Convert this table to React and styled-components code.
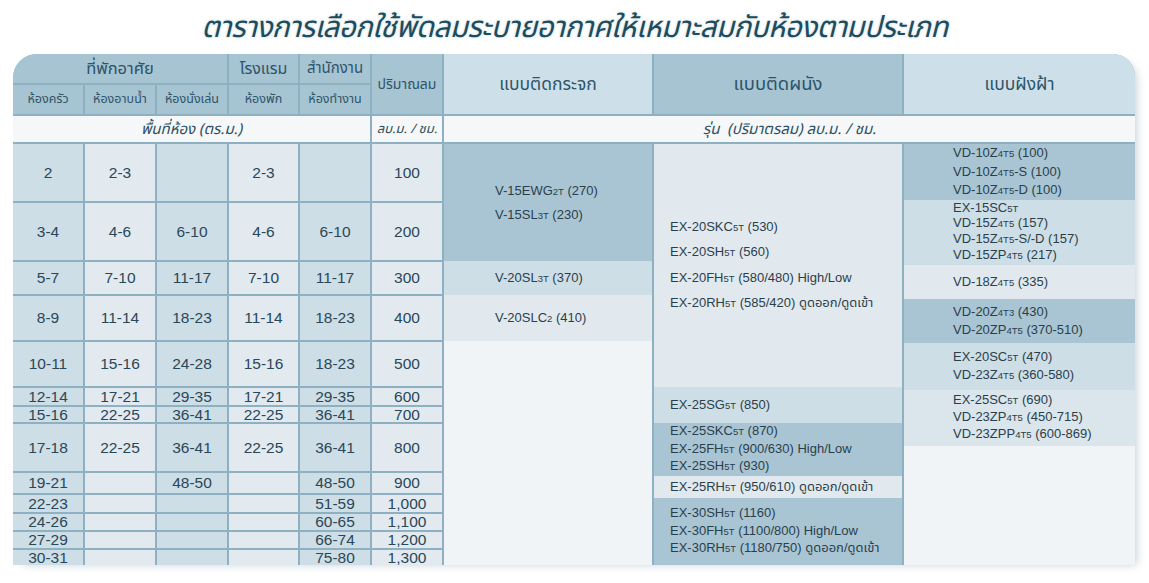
import React from 'react';
import styled, { createGlobalStyle } from 'styled-components';

// colours picked from the chart
const LINE = '#8db0c3';
const TONES = {
  dark: '#a9c5d4',
  mid: '#cddee7',
  light: '#e1e9ef',
  soft: '#dae5ec',
  pale: '#f0f4f6',
};

const THAI = `"Noto Sans Thai", "Noto Sans Thai Looped", "Loma", "Garuda", "Noto Sans", "Liberation Sans", sans-serif`;
const LATIN = `"Liberation Sans", "Noto Sans Thai", "Loma", "Noto Sans", sans-serif`;

const GlobalStyle = createGlobalStyle`
  html, body {
    margin: 0;
    padding: 0;
    background: #ffffff;
  }
  body {
    font-family: ${LATIN};
    color: #2a4656;
  }
`;

const Page = styled.div`
  width: 1149px;
  height: 583px;
  overflow: hidden;
`;

const Title = styled.h1`
  height: 54px;
  margin: 0;
  display: flex;
  align-items: center;
  justify-content: center;
  font-family: ${THAI};
  font-style: italic;
  font-weight: 400;
  font-size: 29.5px;
  color: #1d4c5c;
  letter-spacing: -0.5px;
  text-shadow: 0 0 3px rgba(120, 160, 180, 0.45);
  padding-top: 2px;
  box-sizing: border-box;
`;

const Chart = styled.div`
  margin-left: 13px;
  width: 1122px;
  display: grid;
  grid-template-columns: 70px 70px 70px 69px 70px 70px 208px 248px 231px;
  grid-template-rows: 29px 29px 26px 57px 57px 32px 44px 44px 17px 15px 47px 20px 17px 16px 16px 15px;
  gap: 2px;
  background: ${LINE};
  border-radius: 24px 22px 0 0;
  overflow: hidden;
  box-shadow: 6px 4px 8px -4px rgba(110, 130, 145, 0.35);
`;

const Cell = styled.div`
  grid-column: ${({ $col, $span = 1 }) => `${$col} / span ${$span}`};
  grid-row: ${({ $row, $rows = 1 }) => `${$row} / span ${$rows}`};
  display: flex;
  align-items: center;
  justify-content: center;
  white-space: nowrap;
`;

const HeadCell = styled(Cell)`
  background: ${({ $tone }) => ($tone === 'light' ? '#cde0e9' : '#a7c4d3')};
  font-family: ${THAI};
  font-size: ${({ $size }) => $size || 16}px;
  color: #2d5468;
`;

const LabelCell = styled(Cell)`
  background: #f5f7f8;
  font-family: ${THAI};
  font-style: italic;
  font-size: ${({ $size }) => $size || 13}px;
  color: #2d4f62;
`;

const NumCell = styled(Cell)`
  background: ${({ $shade }) => ($shade ? '#cedee7' : '#e2eaf0')};
  font-size: 15.5px;
  line-height: 1;
  color: #2a4757;
`;

const ModelColumn = styled.div`
  grid-column: ${({ $col }) => $col};
  grid-row: 4 / span 13;
  display: flex;
  flex-direction: column;
  background: ${TONES.pale};
`;

const Segment = styled.div`
  flex: ${({ $h }) => ($h ? `0 0 ${$h}px` : '1 1 auto')};
  background: ${({ $tone }) => TONES[$tone]};
  display: flex;
  flex-direction: column;
  justify-content: center;
  padding-left: ${({ $pad }) => $pad}px;
  font-size: 13px;
  line-height: ${({ $lh = 17 }) => $lh}px;
  color: #2b3f4b;
  white-space: nowrap;
`;

const ModelLine = styled.div`
  font-family: ${LATIN};
`;

const Sub = styled.span`
  font-size: 9.5px;
`;

// "{...}" marks the small suffix printed on each model code
const renderModel = (text) =>
  text.split(/\{([^}]*)\}/).map((part, i) =>
    i % 2 ? <Sub key={i}>{part}</Sub> : <React.Fragment key={i}>{part}</React.Fragment>
  );

const areaRows = [
  ['2', '2-3', '', '2-3', '', '100'],
  ['3-4', '4-6', '6-10', '4-6', '6-10', '200'],
  ['5-7', '7-10', '11-17', '7-10', '11-17', '300'],
  ['8-9', '11-14', '18-23', '11-14', '18-23', '400'],
  ['10-11', '15-16', '24-28', '15-16', '18-23', '500'],
  ['12-14', '17-21', '29-35', '17-21', '29-35', '600'],
  ['15-16', '22-25', '36-41', '22-25', '36-41', '700'],
  ['17-18', '22-25', '36-41', '22-25', '36-41', '800'],
  ['19-21', '', '48-50', '', '48-50', '900'],
  ['22-23', '', '', '', '51-59', '1,000'],
  ['24-26', '', '', '', '60-65', '1,100'],
  ['27-29', '', '', '', '66-74', '1,200'],
  ['30-31', '', '', '', '75-80', '1,300'],
];

const glassModels = [
  { h: 117, tone: 'dark', lh: 23, lines: ['V-15EWG{2T} (270)', 'V-15SL{3T} (230)'] },
  { h: 34, tone: 'mid', lines: ['V-20SL{3T} (370)'] },
  { h: 46, tone: 'light', lines: ['V-20SLC{2} (410)'] },
  { tone: 'pale', lines: [] },
];

const wallModels = [
  {
    h: 243, tone: 'light', lh: 24.5,
    lines: ['EX-20SKC{5T} (530)', 'EX-20SH{5T} (560)', 'EX-20FH{5T} (580/480) High/Low', 'EX-20RH{5T} (585/420) ดูดออก/ดูดเข้า'],
  },
  { h: 36, tone: 'mid', lines: ['EX-25SG{5T} (850)'] },
  { h: 49, tone: 'dark', lh: 16.5, lines: ['EX-25SKC{5T} (870)', 'EX-25FH{5T} (900/630) High/Low', 'EX-25SH{5T} (930)'] },
  { h: 22, tone: 'light', lines: ['EX-25RH{5T} (950/610) ดูดออก/ดูดเข้า'] },
  { tone: 'dark', lh: 16.5, lines: ['EX-30SH{5T} (1160)', 'EX-30FH{5T} (1100/800) High/Low', 'EX-30RH{5T} (1180/750) ดูดออก/ดูดเข้า'] },
];

const ceilingModels = [
  { h: 53, tone: 'dark', lh: 17.5, lines: ['VD-10Z{4T5} (100)', 'VD-10Z{4T5}-S (100)', 'VD-10Z{4T5}-D (100)'] },
  { h: 65, tone: 'mid', lh: 14.7, lines: ['EX-15SC{5T}', 'VD-15Z{4T5} (157)', 'VD-15Z{4T5}-S/-D (157)', 'VD-15ZP{4T5} (217)'] },
  { h: 34, tone: 'light', lines: ['VD-18Z{4T5} (335)'] },
  { h: 44, tone: 'dark', lines: ['VD-20Z{4T3} (430)', 'VD-20ZP{4T5} (370-510)'] },
  { h: 47, tone: 'mid', lines: ['EX-20SC{5T} (470)', 'VD-23Z{4T5} (360-580)'] },
  { h: 56, tone: 'soft', lh: 16, lines: ['EX-25SC{5T} (690)', 'VD-23ZP{4T5} (450-715)', 'VD-23ZPP{4T5} (600-869)'] },
  { tone: 'pale', lines: [] },
];

const ModelStack = ({ col, pad, segments }) => (
  <ModelColumn $col={col}>
    {segments.map((s, i) => (
      <Segment key={i} $h={s.h} $tone={s.tone} $lh={s.lh} $pad={pad}>
        {s.lines.map((line, j) => (
          <ModelLine key={j}>{renderModel(line)}</ModelLine>
        ))}
      </Segment>
    ))}
  </ModelColumn>
);

const App = () => {
  return (
    <Page>
      <GlobalStyle />
      <Title>ตารางการเลือกใช้พัดลมระบายอากาศให้เหมาะสมกับห้องตามประเภท</Title>
      <Chart>
        <HeadCell $col={1} $row={1} $span={3} $size={16.5}>ที่พักอาศัย</HeadCell>
        <HeadCell $col={4} $row={1}>โรงแรม</HeadCell>
        <HeadCell $col={5} $row={1} $size={15}>สำนักงาน</HeadCell>
        <HeadCell $col={6} $row={1} $rows={2} $size={14}>ปริมาณลม</HeadCell>
        <HeadCell $col={7} $row={1} $rows={2} $size={17.5} $tone="light">แบบติดกระจก</HeadCell>
        <HeadCell $col={8} $row={1} $rows={2} $size={18.5}>แบบติดผนัง</HeadCell>
        <HeadCell $col={9} $row={1} $rows={2} $size={17.5} $tone="light">แบบฝังฝ้า</HeadCell>

        <HeadCell $col={1} $row={2} $size={12.5}>ห้องครัว</HeadCell>
        <HeadCell $col={2} $row={2} $size={12.5}>ห้องอาบน้ำ</HeadCell>
        <HeadCell $col={3} $row={2} $size={12.5}>ห้องนั่งเล่น</HeadCell>
        <HeadCell $col={4} $row={2} $size={12.5}>ห้องพัก</HeadCell>
        <HeadCell $col={5} $row={2} $size={12.5}>ห้องทำงาน</HeadCell>

        <LabelCell $col={1} $row={3} $span={5} $size={15}>พื้นที่ห้อง (ตร.ม.)</LabelCell>
        <LabelCell $col={6} $row={3}>ลบ.ม. / ชม.</LabelCell>
        <LabelCell $col={7} $row={3} $span={3} $size={15}>รุ่น&nbsp; (ปริมาตรลม) ลบ.ม. / ชม.</LabelCell>

        {areaRows.map((row, r) =>
          row.map((value, c) => (
            <NumCell key={`${r}-${c}`} $col={c + 1} $row={r + 4} $shade={c % 2 === 0}>
              {value}
            </NumCell>
          ))
        )}

        <ModelStack col={7} pad={51} segments={glassModels} />
        <ModelStack col={8} pad={16} segments={wallModels} />
        <ModelStack col={9} pad={49} segments={ceilingModels} />
      </Chart>
    </Page>
  );
};

export default App;
